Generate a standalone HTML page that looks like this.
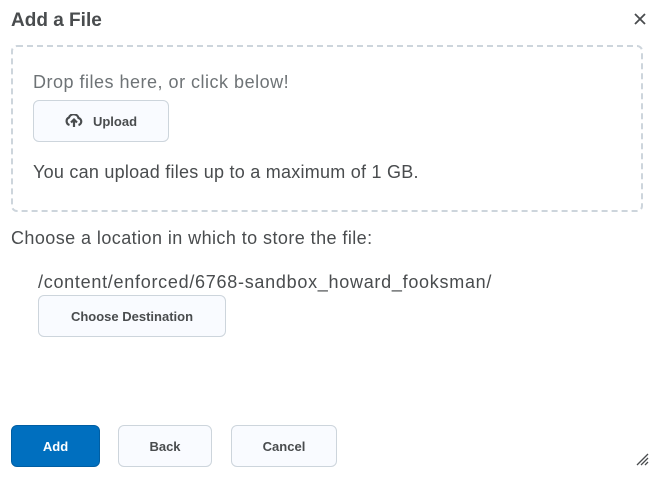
<html><head><style>
body{margin:0;width:665px;height:483px;background:#fff;font-family:"Liberation Sans",sans-serif;color:#494c4e;position:relative;overflow:hidden}
.a{position:absolute;white-space:nowrap}
.btn{position:absolute;box-sizing:border-box;border:1px solid #cdd5dc;background:#f9fbff;border-radius:6px;font-size:13px;font-weight:bold;color:#494c4e;display:flex;align-items:center;justify-content:center}
</style></head><body>
<div class="a" style="left:11px;top:10px;font-size:19px;font-weight:bold;color:#494c4e">Add a File</div>
<svg class="a" style="left:633px;top:12px" width="14" height="14" viewBox="0 0 14 14"><path d="M2 2L12 12M12 2L2 12" stroke="#494c4e" stroke-width="1.8"/></svg>
<div class="a" style="left:11px;top:45px;width:632px;height:167px;box-sizing:border-box;border:2px dashed #cdd5dc;border-radius:6px"></div>
<div class="a" style="left:33px;top:72px;font-size:18px;color:#6e7376;letter-spacing:0.5px">Drop files here, or click below!</div>
<div class="btn" style="left:33px;top:100px;width:136px;height:42px"><svg width="18" height="14" viewBox="0 0 18 14" style="margin-right:10px"><path d="M4.5 11A4 4 0 0 1 4 3.5 5 5 0 0 1 13.5 4 3.6 3.6 0 0 1 13.5 11" fill="none" stroke="#494c4e" stroke-width="2.2"/><path d="M9 13V6M6 8.5L9 5.5 12 8.5" fill="none" stroke="#494c4e" stroke-width="2.2"/></svg>Upload</div>
<div class="a" style="left:33px;top:162px;font-size:18px;letter-spacing:0.25px">You can upload files up to a maximum of 1 GB.</div>
<div class="a" style="left:11px;top:228px;font-size:18px;letter-spacing:0.43px">Choose a location in which to store the file:</div>
<div class="a" style="left:38px;top:272px;font-size:18px;letter-spacing:0.72px">/content/enforced/6768-sandbox_howard_fooksman/</div>
<div class="btn" style="left:38px;top:295px;width:188px;height:42px">Choose Destination</div>
<div class="btn" style="left:11px;top:425px;width:89px;height:42px;background:#006fbf;border-color:#005ea3;color:#fff">Add</div>
<div class="btn" style="left:118px;top:425px;width:94px;height:42px">Back</div>
<div class="btn" style="left:231px;top:425px;width:106px;height:42px">Cancel</div>
<svg class="a" style="left:636px;top:452px" width="14" height="14" viewBox="0 0 14 14"><path d="M1 13L12 2M5 13L12 6M9 13L12 10" stroke="#494c4e" stroke-width="1.3"/></svg>
</body></html>
